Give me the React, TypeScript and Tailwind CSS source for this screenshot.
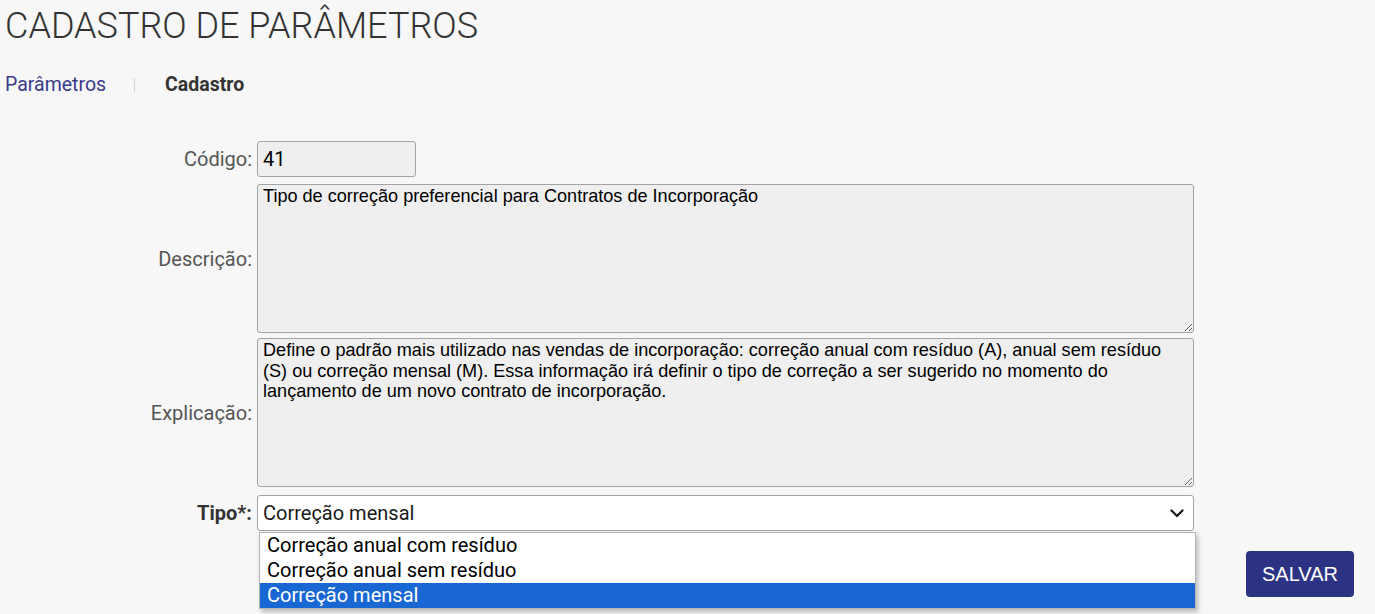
import React from 'react';

const roboto = { fontFamily: 'Roboto, "Liberation Sans", sans-serif' };
const arial = { fontFamily: '"Liberation Sans", Arial, sans-serif' };

function Label({ children, bold }: { children: React.ReactNode; bold?: boolean }) {
  return (
    <div
      className={`w-[257px] shrink-0 pr-[5px] text-right text-[20px] ${bold ? 'font-bold text-[#333]' : 'text-[#555]'}`}
      style={roboto}
    >
      {children}
    </div>
  );
}

export default function App() {
  const options = ['Correção anual com resíduo', 'Correção anual sem resíduo', 'Correção mensal'];

  return (
    <div className="min-h-[614px] w-full bg-[#f7f7f7] text-[#333]" style={roboto}>
      <h1 className="pl-[5px] pt-[4px] text-[36px] font-light leading-[44px] text-[#333]">
        CADASTRO DE PARÂMETROS
      </h1>

      <nav className="mt-[25px] flex items-center pl-[5px] text-[19.5px] leading-[24px]">
        <span className="text-[#3a3a8a]">Parâmetros</span>
        <span className="ml-[28px] mr-[30px] h-[14px] w-px bg-[#d4d4d4]" />
        <span className="font-bold text-[#333]">Cadastro</span>
      </nav>

      <form className="mt-[44px] flex flex-col">
        <div className="flex items-center">
          <Label>Código:</Label>
          <input
            readOnly
            value="41"
            className="h-[36px] w-[159px] rounded-[3px] border border-[#a3a3a3] bg-[#efefef] px-[5px] text-[20px] text-black outline-none"
            style={roboto}
          />
        </div>

        <div className="mt-[7px] flex items-center">
          <Label>Descrição:</Label>
          <textarea
            readOnly
            value="Tipo de correção preferencial para Contratos de Incorporação"
            className="h-[149px] w-[937px] rounded-[3px] border border-[#a3a3a3] bg-[#efefef] pl-[5px] pr-[14px] py-[1px] text-[18.1px] leading-[20.5px] text-black outline-none"
            style={arial}
          />
        </div>

        <div className="mt-[5px] flex items-center">
          <Label>Explicação:</Label>
          <textarea
            readOnly
            value="Define o padrão mais utilizado nas vendas de incorporação: correção anual com resíduo (A), anual sem resíduo (S) ou correção mensal (M). Essa informação irá definir o tipo de correção a ser sugerido no momento do lançamento de um novo contrato de incorporação."
            className="h-[149px] w-[937px] rounded-[3px] border border-[#a3a3a3] bg-[#efefef] pl-[5px] pr-[14px] py-[1px] text-[18.1px] leading-[20.5px] text-black outline-none"
            style={arial}
          />
        </div>

        <div className="mt-[8px] flex items-center">
          <Label bold>Tipo*:</Label>
          <div className="relative w-[937px]">
            <div className="flex h-[36px] items-center justify-between rounded-[3px] border border-[#a3a3a3] bg-white pl-[5px] pr-[9px] text-[20px] text-[#1a1a1a]">
              <span>Correção mensal</span>
              <svg width="14" height="9" viewBox="0 0 14 9" fill="none">
                <path d="M1.5 1.5 L7 7 L12.5 1.5" stroke="#111" strokeWidth="2.2" strokeLinecap="round" strokeLinejoin="round" />
              </svg>
            </div>
            <ul className="absolute left-[2px] top-[37px] z-10 w-[937px] border border-[#b5b5b5] bg-white text-[20px] shadow-[2px_3px_5px_rgba(0,0,0,0.25)]">
              {options.map((o) => (
                <li
                  key={o}
                  className={`h-[25px] pl-[7px] leading-[25px] ${o === 'Correção mensal' ? 'bg-[#1967d2] text-white' : 'text-black'}`}
                >
                  {o}
                </li>
              ))}
            </ul>
          </div>
        </div>

        <div className="mt-[20px] flex justify-end pr-[21px]">
          <button
            type="button"
            className="h-[46px] w-[108px] rounded-[4px] bg-[#2c3383] text-[20px] text-white"
            style={arial}
          >
            SALVAR
          </button>
        </div>
      </form>
    </div>
  );
}
